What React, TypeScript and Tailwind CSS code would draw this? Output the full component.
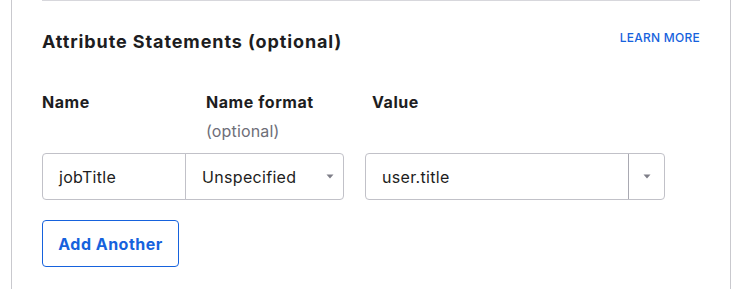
import { ReactNode } from 'react'

const font = { fontFamily: 'Inter, "Noto Sans", sans-serif' }

function Caret() {
  return (
    <svg width="8" height="5" viewBox="0 0 8 5" className="shrink-0">
      <path d="M0.5 0.5 L7.5 0.5 L4 4.5 Z" fill="#7e7e88" />
    </svg>
  )
}

function Label({ children, hint }: { children: ReactNode; hint?: string }) {
  return (
    <div>
      <div className="text-[16px] leading-6 font-bold tracking-[0.035em] text-[#1d1d21]">{children}</div>
      {hint && (
        <div className="mt-[5px] text-[16px] leading-6 tracking-[0.01em] text-[#6e6e78]">{hint}</div>
      )}
    </div>
  )
}

export default function App() {
  return (
    <div className="w-[744px] h-[289px] overflow-hidden bg-white" style={font}>
      <div className="ml-[11px] w-[720px] h-full border-x border-[#c9c9ce] px-[30px]">
        <div className="border-t border-[#d7d7dc] pt-[29px]">
          <div className="flex items-start justify-between">
            <h2 className="text-[18px] leading-6 font-bold tracking-[0.05em] text-[#1d1d21]">
              Attribute Statements (optional)
            </h2>
            <a className="text-[12px] leading-4 font-medium tracking-[0.02em] text-[#1662dd]">
              LEARN MORE
            </a>
          </div>

          <div className="mt-[36px] flex">
            <div className="w-[164px]">
              <Label>Name</Label>
            </div>
            <div className="w-[166px]">
              <Label hint="(optional)">Name format</Label>
            </div>
            <div>
              <Label>Value</Label>
            </div>
          </div>

          <div className="mt-[10px] flex items-stretch h-[47px] text-[16px] tracking-[0.02em] text-[#1d1d21]">
            <div className="w-[144px] flex items-center px-4 border border-[#c1c1c8] rounded-l-[4px]">
              jobTitle
            </div>
            <div className="-ml-px w-[159px] flex items-center justify-between pl-4 pr-[9px] border border-[#c1c1c8] rounded-r-[4px]">
              <span>Unspecified</span>
              <Caret />
            </div>
            <div className="ml-[21px] w-[300px] flex border border-[#c1c1c8] rounded-[4px]">
              <div className="flex-1 flex items-center px-4">user.title</div>
              <div className="w-[36px] flex items-center justify-center border-l border-[#a9a9b2]">
                <Caret />
              </div>
            </div>
          </div>

          <button className="mt-[20px] h-[47px] w-[137px] rounded-[4px] border border-[#1662dd] text-[16px] font-bold tracking-[0.03em] text-[#1662dd]">
            Add Another
          </button>
        </div>
      </div>
    </div>
  )
}
